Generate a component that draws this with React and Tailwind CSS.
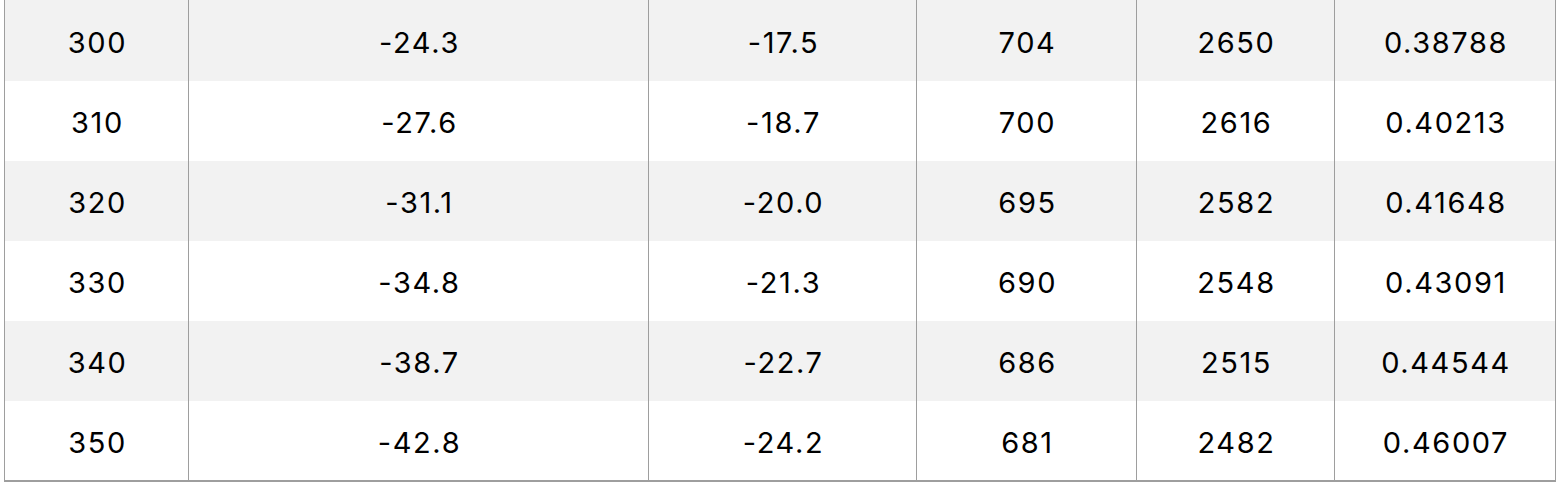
import React from 'react';

const rows = [
  ['300', '-24.3', '-17.5', '704', '2650', '0.38788'],
  ['310', '-27.6', '-18.7', '700', '2616', '0.40213'],
  ['320', '-31.1', '-20.0', '695', '2582', '0.41648'],
  ['330', '-34.8', '-21.3', '690', '2548', '0.43091'],
  ['340', '-38.7', '-22.7', '686', '2515', '0.44544'],
  ['350', '-42.8', '-24.2', '681', '2482', '0.46007'],
];

const widths = ['w-[184px]', 'w-[460px]', 'w-[268px]', 'w-[220px]', 'w-[198px]', 'w-[221px]'];

export default function App() {
  return (
    <div className="w-[1558px] h-[484px] bg-white pl-[4px] font-['Inter','Liberation_Sans',sans-serif] text-[29px] tracking-[1.6px] text-black">
      <table className="table-fixed border-collapse w-[1551px] border-b-2 border-x border-[#9e9e9e]">
        <colgroup>
          {widths.map((w, i) => (
            <col key={i} className={w} />
          ))}
        </colgroup>
        <tbody>
          {rows.map((row, i) => (
            <tr key={i} className={`${i === 0 ? 'h-[81px]' : 'h-[80px]'} ${i % 2 === 0 ? 'bg-[#f2f2f2]' : 'bg-white'}`}>
              {row.map((cell, j) => (
                <td key={j} className="text-center align-middle p-0 pt-[4px] pl-[2px] border-l border-[#9e9e9e] first:border-l-0">
                  {cell}
                </td>
              ))}
            </tr>
          ))}
        </tbody>
      </table>
    </div>
  );
}
